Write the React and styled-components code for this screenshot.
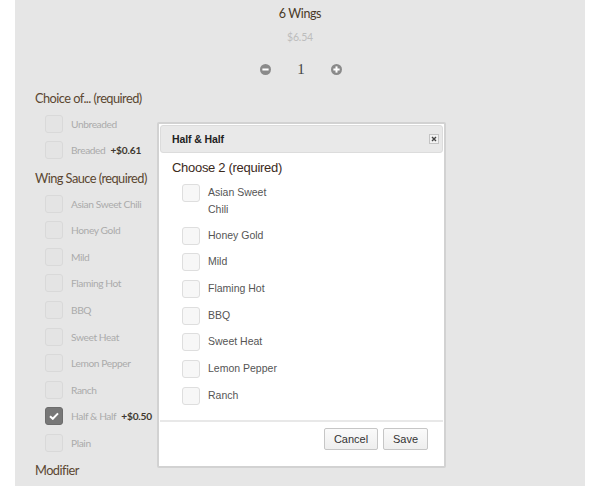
import React from "react"
import styled, { createGlobalStyle } from "styled-components"

const GlobalStyle = createGlobalStyle`
  body {
    margin: 0;
    background: #ffffff;
    font-family: Lato, "Open Sans", sans-serif;
  }
`

const Panel = styled.div`
  position: relative;
  width: 570px;
  height: 486px;
  margin: 0 15px;
  background: #e6e6e6;
  overflow: hidden;
  padding: 5px 20px 0;
  box-sizing: border-box;
`

const Header = styled.div`
  display: flex;
  flex-direction: column;
  align-items: center;
`

const ItemName = styled.div`
  font-size: 12.5px;
  letter-spacing: -0.4px;
  line-height: 18px;
  color: #4a3a28;
`

const Price = styled.div`
  margin-top: 6px;
  font-size: 10.5px;
  letter-spacing: -0.2px;
  line-height: 16px;
  color: #bdbdbd;
`

const Quantity = styled.div`
  display: flex;
  align-items: center;
  gap: 26px;
  margin-top: 15px;
  height: 18px;
  padding-left: 2px;
`

const Count = styled.span`
  font-family: "Liberation Serif", serif;
  font-size: 15px;
  color: #444;
  width: 8px;
  text-align: center;
`

const Section = styled.div`
  display: flex;
  flex-direction: column;
`

const Heading = styled.div`
  height: 26.6px;
  line-height: 28.6px;
  font-size: 12.8px;
  letter-spacing: -0.55px;
  color: #5b4631;
  margin-top: ${p => (p.first ? "6px" : "0")};
`

const Option = styled.div`
  display: flex;
  align-items: center;
  gap: 8px;
  height: 26.6px;
  padding-left: 10px;
`

const Box = styled.span`
  width: 18px;
  height: 18px;
  box-sizing: border-box;
  border-radius: 3px;
  border: 1px solid ${p => (p.checked ? "#6c6c6c" : "#d9d9d9")};
  background: ${p => (p.checked ? "#777777" : "#e4e4e4")};
  display: flex;
  align-items: center;
  justify-content: center;
`

const OptionLabel = styled.span`
  font-size: 10.2px;
  letter-spacing: -0.4px;
  color: #ababab;
`

const Extra = styled.b`
  margin-left: 5px;
  color: #40382f;
  letter-spacing: -0.2px;
`

const Modal = styled.div`
  position: absolute;
  left: 142px;
  top: 122px;
  width: 289px;
  height: 346px;
  box-sizing: border-box;
  background: #fff;
  border: 2px solid #d2d2d2;
  border-radius: 2px;
  padding: 1px;
  display: flex;
  flex-direction: column;
  font-family: "Liberation Sans", Arial, sans-serif;
`

const TitleBar = styled.div`
  display: flex;
  align-items: center;
  justify-content: space-between;
  height: 28px;
  box-sizing: border-box;
  padding: 0 3px 0 11px;
  background: #e9e9e9;
  border: 1px solid #dcdcdc;
  border-radius: 3px;
`

const Title = styled.span`
  font-size: 10.5px;
  font-weight: bold;
  letter-spacing: -0.1px;
  color: #222;
`

const Close = styled.span`
  width: 10px;
  height: 10px;
  box-sizing: border-box;
  border: 1px solid #c4c4c4;
  background: #f2f2f2;
  display: flex;
  align-items: center;
  justify-content: center;
`

const ModalBody = styled.div`
  flex: 1;
  padding: 7px 0 0 12px;
`

const ChooseTitle = styled.div`
  font-size: 13px;
  letter-spacing: -0.3px;
  line-height: 16px;
  color: #3c2a1c;
  margin-bottom: 8px;
`

const Choice = styled.div`
  display: flex;
  align-items: flex-start;
  gap: 8px;
  padding-left: 10px;
  margin-bottom: 8.7px;
`

const ChoiceBox = styled.span`
  flex: none;
  width: 18px;
  height: 18px;
  box-sizing: border-box;
  border: 1px solid #dedede;
  border-radius: 3px;
  background: #f7f7f7;
`

const ChoiceLabel = styled.span`
  width: 70px;
  font-size: 10.5px;
  line-height: 17px;
  color: #555;
`

const Footer = styled.div`
  border-top: 2px solid #e8e8e8;
  display: flex;
  justify-content: flex-end;
  gap: 5px;
  padding: 6px 15px 15px 0;
`

const Button = styled.button`
  height: 22px;
  width: ${p => p.w}px;
  padding: 0;
  font-family: "Liberation Sans", Arial, sans-serif;
  font-size: 11px;
  color: #333;
  background: linear-gradient(#fafafa, #eeeeee);
  border: 1px solid #c6c6c6;
  border-radius: 2px;
`

const CircleIcon = ({ plus }) => (
  <svg width="11" height="11" viewBox="0 0 12 12">
    <circle cx="6" cy="6" r="6" fill="#8a8a8a" />
    <rect x="2.6" y="4.9" width="6.8" height="2.2" fill="#fff" />
    {plus && <rect x="4.9" y="2.6" width="2.2" height="6.8" fill="#fff" />}
  </svg>
)

const Check = () => (
  <svg width="10" height="8" viewBox="0 0 10 8">
    <path d="M1 4.2 L3.8 6.8 L9 1.4" stroke="#fff" strokeWidth="2" fill="none" />
  </svg>
)

const sauces = [
  "Asian Sweet Chili",
  "Honey Gold",
  "Mild",
  "Flaming Hot",
  "BBQ",
  "Sweet Heat",
  "Lemon Pepper",
  "Ranch",
]

const App = () => {
  return (
    <Panel>
      <GlobalStyle />
      <Header>
        <ItemName>6 Wings</ItemName>
        <Price>$6.54</Price>
        <Quantity>
          <CircleIcon />
          <Count>1</Count>
          <CircleIcon plus />
        </Quantity>
      </Header>
      <Section>
        <Heading first>Choice of... (required)</Heading>
        <Option>
          <Box />
          <OptionLabel>Unbreaded</OptionLabel>
        </Option>
        <Option>
          <Box />
          <OptionLabel>
            Breaded<Extra>+$0.61</Extra>
          </OptionLabel>
        </Option>
        <Heading>Wing Sauce (required)</Heading>
        {sauces.map(s => (
          <Option key={s}>
            <Box />
            <OptionLabel>{s}</OptionLabel>
          </Option>
        ))}
        <Option>
          <Box checked>
            <Check />
          </Box>
          <OptionLabel>
            Half &amp; Half<Extra>+$0.50</Extra>
          </OptionLabel>
        </Option>
        <Option>
          <Box />
          <OptionLabel>Plain</OptionLabel>
        </Option>
        <Heading>Modifier</Heading>
      </Section>

      <Modal>
        <TitleBar>
          <Title>Half &amp; Half</Title>
          <Close>
            <svg width="6" height="6" viewBox="0 0 6 6">
              <path d="M1 1 L5 5 M5 1 L1 5" stroke="#444" strokeWidth="1.4" />
            </svg>
          </Close>
        </TitleBar>
        <ModalBody>
          <ChooseTitle>Choose 2 (required)</ChooseTitle>
          {sauces.map(s => (
            <Choice key={s}>
              <ChoiceBox />
              <ChoiceLabel>{s}</ChoiceLabel>
            </Choice>
          ))}
        </ModalBody>
        <Footer>
          <Button w={54}>Cancel</Button>
          <Button w={45}>Save</Button>
        </Footer>
      </Modal>
    </Panel>
  )
}

export default App
